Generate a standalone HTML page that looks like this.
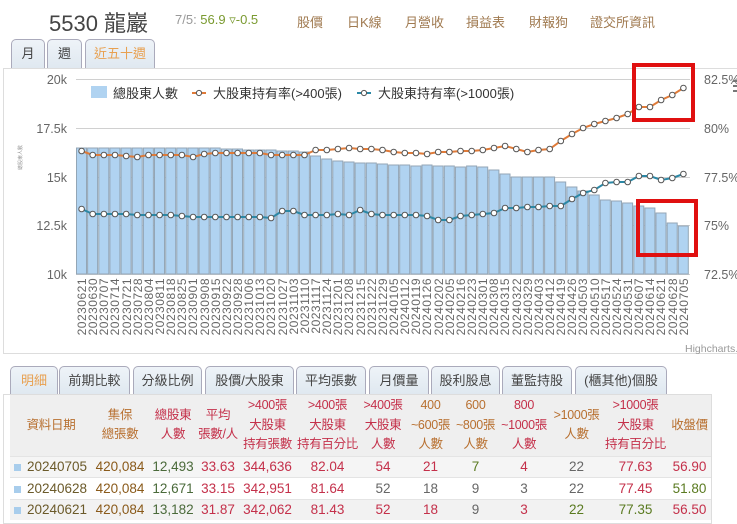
<!DOCTYPE html>
<html><head><meta charset="utf-8"><style>
body{margin:0;width:737px;height:522px;overflow:hidden;background:#fff;font-family:"Liberation Sans","Noto Sans CJK TC",sans-serif;position:relative}
.a{position:absolute;white-space:nowrap}
.nav{color:#a07a50;font-size:13px;top:12px}
.tab{position:absolute;border:1px solid #aab;border-bottom:none;border-radius:5px 5px 0 0;background:linear-gradient(#eef3f8,#dfe8f0);font-size:13px;color:#444;text-align:center;box-sizing:border-box}
table{border-collapse:collapse;position:absolute;left:10px;top:395px;font-size:13.5px;table-layout:fixed}
td{text-align:center;padding:0;white-space:nowrap}
thead td{line-height:19.5px;background:#efefef;font-size:12.5px;letter-spacing:-0.3px}
tbody td{height:20.5px;border-top:1px solid #e4e4e4}
.r{color:#c4304a}.b{color:#8a5a1a}.g{color:#5a7a20}.o{color:#b87030}.d{color:#6b5a2a}.k{color:#666}.gr{color:#4a6a3a}
.sq{display:inline-block;width:7px;height:7px;background:#a8cdec;margin-right:6px}
</style></head><body>
<div class="a" style="left:49px;top:6px;font-size:22px;color:#444">5530 龍巖</div>
<div class="a" style="left:175px;top:12px;font-size:13px;color:#999">7/5: <span style="color:#7a9a30">56.9</span> <span style="color:#7a9a30">▿-0.5</span></div>
<div class="a nav" style="left:297px">股價</div>
<div class="a nav" style="left:347px">日K線</div>
<div class="a nav" style="left:405px">月營收</div>
<div class="a nav" style="left:466px">損益表</div>
<div class="a nav" style="left:529px">財報狗</div>
<div class="a nav" style="left:590px">證交所資訊</div>

<div class="tab" style="left:11px;top:39px;width:34px;height:30px;line-height:28px">月</div>
<div class="tab" style="left:47px;top:39px;width:35px;height:30px;line-height:28px">週</div>
<div class="tab" style="left:85px;top:39px;width:70px;height:30px;line-height:28px;color:#e8a050">近五十週</div>
<div class="a" style="left:3px;top:68px;width:740px;height:286px;border:1px solid #ddd;border-right:none;box-sizing:border-box"></div>

<svg class="a" style="left:0;top:0" width="737" height="360" font-family="Liberation Sans, sans-serif">
<defs>
<marker id="mo" markerWidth="8" markerHeight="8" refX="4" refY="4" markerUnits="userSpaceOnUse"><circle cx="4" cy="4" r="2.8" fill="#fff" stroke="#555" stroke-width="1"/></marker>
</defs>
<g stroke="#d0d0d0" stroke-width="1">
<line x1="76" y1="79.5" x2="690" y2="79.5"/><line x1="76" y1="128.5" x2="690" y2="128.5"/><line x1="76" y1="177.5" x2="690" y2="177.5"/><line x1="76" y1="225.5" x2="690" y2="225.5"/><line x1="76" y1="274.5" x2="690" y2="274.5"/>
</g>
<g font-size="12.5" fill="#666" text-anchor="end">
<text x="67" y="84">20k</text><text x="67" y="133">17.5k</text><text x="67" y="182">15k</text><text x="67" y="230">12.5k</text><text x="67" y="279">10k</text>
</g>
<g font-size="12.5" fill="#666">
<text x="704" y="84">82.5%</text><text x="704" y="133">80%</text><text x="704" y="182">77.5%</text><text x="704" y="230">75%</text><text x="704" y="279">72.5%</text>
</g>
<text x="22" y="170" font-size="5" fill="#999" transform="rotate(-90 22 170)" font-family="Noto Sans CJK TC, sans-serif">總股東人數</text>
<g fill="#b0d3f1" stroke="#93a6b6" stroke-width="1">
<rect x="76.5" y="148" width="10" height="126"/><rect x="87.6" y="148" width="10" height="126"/><rect x="98.8" y="148" width="10" height="126"/><rect x="109.9" y="148" width="10" height="126"/><rect x="121.1" y="148" width="10" height="126"/><rect x="132.2" y="148" width="10" height="126"/><rect x="143.4" y="148" width="10" height="126"/><rect x="154.5" y="148" width="10" height="126"/><rect x="165.7" y="148" width="10" height="126"/><rect x="176.8" y="148" width="10" height="126"/><rect x="188.0" y="148" width="10" height="126"/><rect x="199.1" y="148" width="10" height="126"/><rect x="210.2" y="148" width="10" height="126"/><rect x="221.4" y="149" width="10" height="125"/><rect x="232.5" y="149" width="10" height="125"/><rect x="243.7" y="150" width="10" height="124"/><rect x="254.8" y="150" width="10" height="124"/><rect x="266.0" y="150" width="10" height="124"/><rect x="277.1" y="151" width="10" height="123"/><rect x="288.3" y="151" width="10" height="123"/><rect x="299.4" y="152" width="10" height="122"/><rect x="310.5" y="156" width="10" height="118"/><rect x="321.7" y="159" width="10" height="115"/><rect x="332.8" y="161" width="10" height="113"/><rect x="344.0" y="162" width="10" height="112"/><rect x="355.1" y="163" width="10" height="111"/><rect x="366.3" y="163" width="10" height="111"/><rect x="377.4" y="164" width="10" height="110"/><rect x="388.6" y="165" width="10" height="109"/><rect x="399.7" y="165" width="10" height="109"/><rect x="410.9" y="166" width="10" height="108"/><rect x="422.0" y="165" width="10" height="109"/><rect x="433.1" y="166" width="10" height="108"/><rect x="444.3" y="166" width="10" height="108"/><rect x="455.4" y="167" width="10" height="107"/><rect x="466.6" y="166" width="10" height="108"/><rect x="477.7" y="167" width="10" height="107"/><rect x="488.9" y="170" width="10" height="104"/><rect x="500.0" y="174" width="10" height="100"/><rect x="511.2" y="177" width="10" height="97"/><rect x="522.3" y="177" width="10" height="97"/><rect x="533.4" y="177" width="10" height="97"/><rect x="544.6" y="177" width="10" height="97"/><rect x="555.7" y="182" width="10" height="92"/><rect x="566.9" y="187" width="10" height="87"/><rect x="578.0" y="191" width="10" height="83"/><rect x="589.2" y="195" width="10" height="79"/><rect x="600.3" y="200" width="10" height="74"/><rect x="611.5" y="201" width="10" height="73"/><rect x="622.6" y="203" width="10" height="71"/><rect x="633.8" y="206" width="10" height="68"/><rect x="644.9" y="208" width="10" height="66"/><rect x="656.0" y="213" width="10" height="61"/><rect x="667.2" y="223" width="10" height="51"/><rect x="678.3" y="226" width="10" height="48"/>
</g>
<polyline fill="none" stroke="#e07b39" stroke-width="2" marker-start="url(#mo)" marker-mid="url(#mo)" marker-end="url(#mo)" points="81.6,151 92.7,155 103.9,155 115.0,155 126.2,156 137.3,157 148.5,155 159.6,155 170.8,155 181.9,155 193.1,157 204.2,154 215.3,153 226.5,153 237.6,153 248.8,153 259.9,153 271.1,155 282.2,155 293.4,155 304.5,155 315.6,150 326.8,150 337.9,149 349.1,148 360.2,149 371.4,149 382.5,150 393.7,152 404.8,153 416.0,153 427.1,154 438.2,152 449.4,152 460.5,151 471.7,151 482.8,150 494.0,148 505.1,146 516.3,149 527.4,152 538.5,150 549.7,149 560.8,141 572.0,134 583.1,128 594.3,124 605.4,121 616.6,118 627.7,114 638.9,107 650.0,107 661.1,100 672.3,95 683.4,88"/>
<polyline fill="none" stroke="#2b88a6" stroke-width="2" marker-start="url(#mo)" marker-mid="url(#mo)" marker-end="url(#mo)" points="81.6,209 92.7,214 103.9,214 115.0,214 126.2,214 137.3,215 148.5,215 159.6,215 170.8,215 181.9,216 193.1,217 204.2,217 215.3,217 226.5,217 237.6,217 248.8,217 259.9,217 271.1,218 282.2,211 293.4,211 304.5,215 315.6,215 326.8,215 337.9,214 349.1,215 360.2,210 371.4,214 382.5,215 393.7,215 404.8,215 416.0,215 427.1,216 438.2,220 449.4,220 460.5,216 471.7,215 482.8,214 494.0,213 505.1,208 516.3,208 527.4,207 538.5,207 549.7,206 560.8,206 572.0,199 583.1,193 594.3,190 605.4,183 616.6,182 627.7,182 638.9,176 650.0,176 661.1,180 672.3,178 683.4,174"/>
<rect x="634" y="65" width="59" height="55" fill="none" stroke="#e01010" stroke-width="4"/>
<rect x="638" y="201" width="58" height="54" fill="none" stroke="#e01010" stroke-width="4"/>
<rect x="91" y="86" width="16" height="12" fill="#b0d3f1"/>
<line x1="192" y1="93" x2="206" y2="93" stroke="#e07b39" stroke-width="2"/><circle cx="199" cy="93" r="2.6" fill="#fff" stroke="#555"/>
<line x1="357" y1="93" x2="371" y2="93" stroke="#2b88a6" stroke-width="2"/><circle cx="364" cy="93" r="2.6" fill="#fff" stroke="#555"/>
<g font-size="13" fill="#333" font-family="Liberation Sans, Noto Sans CJK TC, sans-serif">
<text x="113" y="98">總股東人數</text><text x="213" y="98">大股東持有率(&gt;400張)</text><text x="378" y="98">大股東持有率(&gt;1000張)</text>
</g>
<g fill="#777"><rect x="733" y="80" width="4" height="2"/><rect x="733" y="85" width="4" height="2"/><rect x="733" y="90" width="4" height="2"/></g>
<g font-size="12" fill="#666" text-anchor="end" letter-spacing="0.5">
<text transform="translate(86,278) rotate(-90)">20230621</text><text transform="translate(97,278) rotate(-90)">20230630</text><text transform="translate(108,278) rotate(-90)">20230707</text><text transform="translate(119,278) rotate(-90)">20230714</text><text transform="translate(131,278) rotate(-90)">20230721</text><text transform="translate(142,278) rotate(-90)">20230728</text><text transform="translate(153,278) rotate(-90)">20230804</text><text transform="translate(164,278) rotate(-90)">20230811</text><text transform="translate(175,278) rotate(-90)">20230818</text><text transform="translate(186,278) rotate(-90)">20230825</text><text transform="translate(197,278) rotate(-90)">20230901</text><text transform="translate(209,278) rotate(-90)">20230908</text><text transform="translate(220,278) rotate(-90)">20230915</text><text transform="translate(231,278) rotate(-90)">20230922</text><text transform="translate(242,278) rotate(-90)">20230928</text><text transform="translate(253,278) rotate(-90)">20231006</text><text transform="translate(264,278) rotate(-90)">20231013</text><text transform="translate(275,278) rotate(-90)">20231020</text><text transform="translate(287,278) rotate(-90)">20231027</text><text transform="translate(298,278) rotate(-90)">20231103</text><text transform="translate(309,278) rotate(-90)">20231110</text><text transform="translate(320,278) rotate(-90)">20231117</text><text transform="translate(331,278) rotate(-90)">20231124</text><text transform="translate(342,278) rotate(-90)">20231201</text><text transform="translate(353,278) rotate(-90)">20231208</text><text transform="translate(365,278) rotate(-90)">20231215</text><text transform="translate(376,278) rotate(-90)">20231222</text><text transform="translate(387,278) rotate(-90)">20231229</text><text transform="translate(398,278) rotate(-90)">20240105</text><text transform="translate(409,278) rotate(-90)">20240112</text><text transform="translate(420,278) rotate(-90)">20240119</text><text transform="translate(431,278) rotate(-90)">20240126</text><text transform="translate(443,278) rotate(-90)">20240202</text><text transform="translate(454,278) rotate(-90)">20240205</text><text transform="translate(465,278) rotate(-90)">20240216</text><text transform="translate(476,278) rotate(-90)">20240223</text><text transform="translate(487,278) rotate(-90)">20240301</text><text transform="translate(498,278) rotate(-90)">20240308</text><text transform="translate(509,278) rotate(-90)">20240315</text><text transform="translate(521,278) rotate(-90)">20240322</text><text transform="translate(532,278) rotate(-90)">20240329</text><text transform="translate(543,278) rotate(-90)">20240403</text><text transform="translate(554,278) rotate(-90)">20240412</text><text transform="translate(565,278) rotate(-90)">20240419</text><text transform="translate(576,278) rotate(-90)">20240426</text><text transform="translate(587,278) rotate(-90)">20240503</text><text transform="translate(599,278) rotate(-90)">20240510</text><text transform="translate(610,278) rotate(-90)">20240517</text><text transform="translate(621,278) rotate(-90)">20240524</text><text transform="translate(632,278) rotate(-90)">20240531</text><text transform="translate(643,278) rotate(-90)">20240607</text><text transform="translate(654,278) rotate(-90)">20240614</text><text transform="translate(665,278) rotate(-90)">20240621</text><text transform="translate(677,278) rotate(-90)">20240628</text><text transform="translate(688,278) rotate(-90)">20240705</text>
</g>
<text x="685" y="352" font-size="10.5" fill="#999">Highcharts.com</text>
</svg>

<div class="tab" style="left:10px;top:366px;width:48px;height:29px;line-height:28px;color:#e8a050">明細</div>
<div class="tab" style="left:59px;top:366px;width:71px;height:29px;line-height:28px">前期比較</div>
<div class="tab" style="left:133px;top:366px;width:69px;height:29px;line-height:28px">分級比例</div>
<div class="tab" style="left:205px;top:366px;width:89px;height:29px;line-height:28px">股價/大股東</div>
<div class="tab" style="left:296px;top:366px;width:70px;height:29px;line-height:28px">平均張數</div>
<div class="tab" style="left:369px;top:366px;width:60px;height:29px;line-height:28px">月價量</div>
<div class="tab" style="left:431px;top:366px;width:69px;height:29px;line-height:28px">股利股息</div>
<div class="tab" style="left:502px;top:366px;width:70px;height:29px;line-height:28px">董監持股</div>
<div class="tab" style="left:575px;top:366px;width:92px;height:29px;line-height:28px">(櫃其他)個股</div>
<div class="a" style="left:3px;top:394px;width:709px;height:130px;border:1px solid #ddd;box-sizing:border-box"></div>

<table>
<colgroup><col style="width:82px"><col style="width:56px"><col style="width:50px"><col style="width:40px"><col style="width:59px"><col style="width:58px"><col style="width:50px"><col style="width:45px"><col style="width:45px"><col style="width:52px"><col style="width:53px"><col style="width:65px"><col style="width:43px"></colgroup>
<thead><tr style="height:61px">
<td class="o">資料日期</td><td class="o">集保<br>總張數</td><td class="r">總股東<br>人數</td><td class="r">平均<br>張數/人</td><td class="r">&gt;400張<br>大股東<br>持有張數</td><td class="r">&gt;400張<br>大股東<br>持有百分比</td><td class="r">&gt;400張<br>大股東<br>人數</td><td class="o">400<br>~600張<br>人數</td><td class="o">600<br>~800張<br>人數</td><td class="r">800<br>~1000張<br>人數</td><td class="o">&gt;1000張<br>人數</td><td class="r">&gt;1000張<br>大股東<br>持有百分比</td><td class="o">收盤價</td>
</tr></thead>
<tbody>
<tr style="background:#f5f5f5"><td class="d" style="text-align:left;padding-left:4px"><span class="sq"></span>20240705</td><td class="b">420,084</td><td class="gr">12,493</td><td class="r">33.63</td><td class="r">344,636</td><td class="r">82.04</td><td class="r">54</td><td class="r">21</td><td class="g">7</td><td class="r">4</td><td class="k">22</td><td class="r">77.63</td><td class="r">56.90</td></tr>
<tr style="background:#fff"><td class="d" style="text-align:left;padding-left:4px"><span class="sq"></span>20240628</td><td class="b">420,084</td><td class="gr">12,671</td><td class="r">33.15</td><td class="r">342,951</td><td class="r">81.64</td><td class="k">52</td><td class="k">18</td><td class="k">9</td><td class="k">3</td><td class="k">22</td><td class="r">77.45</td><td class="g">51.80</td></tr>
<tr style="background:#f2f2f2"><td class="d" style="text-align:left;padding-left:4px"><span class="sq"></span>20240621</td><td class="b">420,084</td><td class="gr">13,182</td><td class="r">31.87</td><td class="r">342,062</td><td class="r">81.43</td><td class="r">52</td><td class="r">18</td><td class="k">9</td><td class="r">3</td><td class="g">22</td><td class="g">77.35</td><td class="r">56.50</td></tr>
</tbody></table>
</body></html>
